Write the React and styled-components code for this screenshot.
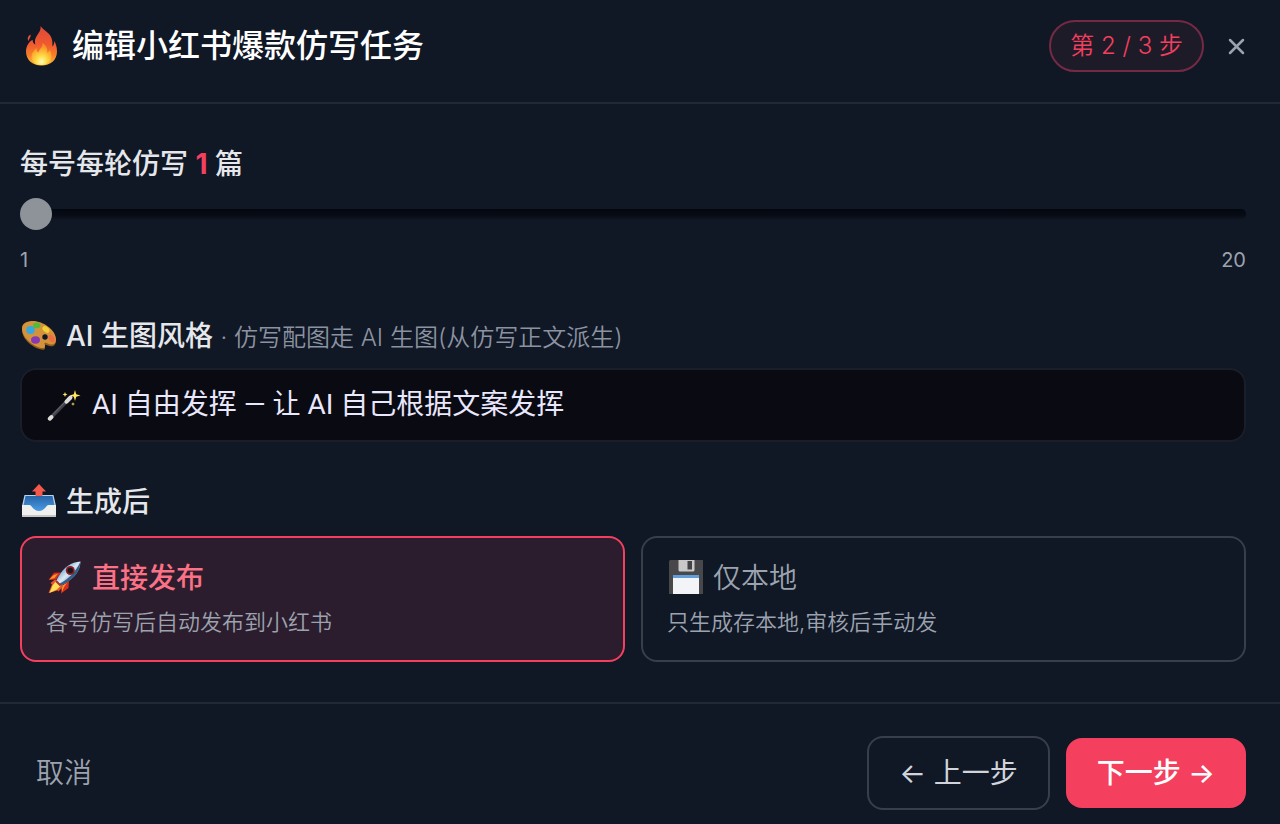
import React, { useState } from "react";
import styled, { createGlobalStyle, css } from "styled-components";

const GlobalStyle = createGlobalStyle`
  *, *::before, *::after { box-sizing: border-box; }
  body { margin: 0; background: #101725; }
  button, input, select { font: inherit; }
`;

const Dialog = styled.form`
  min-height: 100vh;
  display: flex;
  flex-direction: column;
  background: #101725;
  color: #e5e7eb;
  font-family: Inter, "Noto Sans CJK SC", sans-serif;
  font-size: 28px;
  font-weight: 350;
  line-height: 40px;
`;

const Header = styled.header`
  display: flex;
  align-items: center;
  justify-content: space-between;
  padding: 20px 20px 30px;
  border-bottom: 2px solid #222836;
`;

const Title = styled.h1`
  display: flex;
  align-items: center;
  gap: 8px;
  margin: 0;
  color: #ffffff;
  font-size: 32px;
  font-weight: 500;
  line-height: 52px;
`;

const HeaderTools = styled.div`
  display: flex;
  align-items: center;
  gap: 8px;
`;

const StepPill = styled.span`
  padding: 0 19px;
  border: 2px solid #742a43;
  border-radius: 26px;
  background: #1e1b29;
  color: #f43f5e;
  font-size: 24px;
  line-height: 48px;
`;

const CloseButton = styled.button`
  display: flex;
  align-items: center;
  justify-content: center;
  width: 48px;
  height: 48px;
  padding: 0;
  border: 0;
  background: none;
  color: #9ca3af;
  cursor: pointer;
`;

const Body = styled.main`
  display: flex;
  flex-direction: column;
  gap: 40px;
  padding: 40px 34px 40px 20px;
`;

const Field = styled.section`
  display: flex;
  flex-direction: column;
  gap: ${(p) => p.$gap}px;
`;

const labelText = css`
  display: flex;
  align-items: center;
  gap: 8px;
  font-weight: 500;
`;

const FieldLabel = styled.label`${labelText}`;
const FieldHeading = styled.h2`
  ${labelText}
  margin: 0;
  font-size: 28px;
`;

const Count = styled.strong`
  color: #f43f5e;
  font-weight: 700;
`;

const Hint = styled.span`
  color: #8b93a1;
  font-size: 24px;
  font-weight: 350;
  line-height: 24px;
`;

const Slider = styled.input`
  appearance: none;
  display: block;
  width: 100%;
  height: 32px;
  margin: 0;
  background: none;
  cursor: pointer;

  &::-webkit-slider-runnable-track {
    height: 10px;
    border-radius: 5px;
    background: linear-gradient(#04070f, #070b15 60%, #0e1420);
  }
  &::-webkit-slider-thumb {
    appearance: none;
    width: 32px;
    height: 32px;
    margin-top: -11px;
    border-radius: 50%;
    background: #8e9299;
  }
`;

const Scale = styled.div`
  display: flex;
  justify-content: space-between;
  color: #9ca3af;
  font-size: 20px;
  font-weight: 400;
  line-height: 32px;
`;

const SelectBox = styled.div`
  display: flex;
  align-items: center;
  gap: 8px;
  padding: 0 24px;
  border: 2px solid #1a1e29;
  border-radius: 16px;
  background: #0a0a12;
`;

const Select = styled.select`
  appearance: none;
  flex: 1;
  min-width: 0;
  height: 70px;
  padding: 0;
  border: 0;
  outline: 0;
  background: none;
  color: #e9e7fb;
  font-family: Roboto, "Noto Sans CJK SC", sans-serif;
  font-weight: 400;
  cursor: pointer;
`;

const Cards = styled.div`
  display: grid;
  grid-template-columns: 1fr 1fr;
  gap: 16px;
`;

const Card = styled.label`
  position: relative;
  display: flex;
  flex-direction: column;
  gap: 8px;
  padding: 20px 24px 22px;
  border: 2px solid ${(p) => (p.$active ? "#f43f5e" : "#383e4a")};
  border-radius: 16px;
  background: ${(p) => (p.$active ? "#2b1d2d" : "transparent")};
  color: #9ca3af;
  cursor: pointer;
`;

const CardRadio = styled.input`
  appearance: none;
  position: absolute;
  inset: 0;
  margin: 0;
  border-radius: 14px;
  cursor: pointer;
`;

const CardTitle = styled.span`
  display: flex;
  align-items: center;
  gap: 8px;
  color: ${(p) => (p.$active ? "#fb7185" : "#9ca3af")};
  font-weight: ${(p) => (p.$active ? 500 : 350)};
`;

const CardText = styled.span`
  font-size: 22px;
  line-height: 32px;
`;

const Footer = styled.footer`
  display: flex;
  align-items: center;
  justify-content: space-between;
  padding: 32px 34px 14px 20px;
  border-top: 2px solid #222836;
`;

const Actions = styled.div`
  display: flex;
  align-items: center;
  gap: 16px;
`;

const buttonKinds = {
  plain: css`
    padding: 0 16px;
    background: none;
    color: #9ca3af;
  `,
  outline: css`
    padding: 15px 30px;
    border: 2px solid #383e4a;
    color: #d1d5db;
    background: none;
    font-weight: 400;
  `,
  primary: css`
    padding: 15px 31px;
    background: #f43f5e;
    color: #ffffff;
    font-weight: 500;
  `,
};

const Button = styled.button`
  border: 0;
  border-radius: 16px;
  line-height: 40px;
  cursor: pointer;
  ${(p) => buttonKinds[p.$kind]}
`;

const Glyph = styled.svg`
  flex: none;
  width: ${(p) => p.$w || 38}px;
  height: 40px;
`;

const Fire = () => (
  <Glyph $w={44} viewBox="0 0 44 40" aria-hidden="true">
    <defs>
      <linearGradient id="fire" x1="0" y1="0" x2="0" y2="1">
        <stop offset="0" stopColor="#dc4a3c" />
        <stop offset=".45" stopColor="#f0582f" />
        <stop offset=".75" stopColor="#f8802a" />
        <stop offset="1" stopColor="#fcc23a" />
      </linearGradient>
      <radialGradient id="flame" cx=".5" cy=".85" r=".7">
        <stop offset="0" stopColor="#fffbc0" />
        <stop offset=".35" stopColor="#ffe04b" />
        <stop offset=".75" stopColor="#fdb02e" />
        <stop offset="1" stopColor="#fb8f2c" />
      </radialGradient>
    </defs>
    <path fill="url(#fire)" d="M20.500 0c.6 4-1.500 6.500-3.500 9.500-2 3-2.500 5.500-1.700 9-1.600-.8-2.600-2.600-2.800-4.800C8.500 16 6 20.500 6 25.500 6 34 12.500 39.500 21.500 39.500S37 34 37 25.500c0-4-1-7.500-2.700-10.500 0 2.500-.6 4.200-2 5.500.6-5-.3-9.500-3.800-13C25.500 4.500 22.500 3 20.500 0z" />
    <path fill="#e8503a" d="M10.500 8.500c.8 2.500-1.500 3.800-1.800 6.500-1.600-1.500-1.200-4.800 1.800-6.500z" />
    <path fill="url(#flame)" d="M22.500 17c.7 4-3 5.500-4 9.500-1.600-1-2.200-2.500-2-4.500-3 2.500-5 5-5 8.500 0 5.500 4 8.500 10 8.500s10-3.500 10-9c0-3-.8-5-2-6.500-.3 1.700-1 2.700-2.200 3.500.5-4.500-1.300-7.500-4.800-10z" />
  </Glyph>
);

const Palette = () => (
  <Glyph viewBox="0 0 38 40" aria-hidden="true">
    <path fill="#925c1c" d="M2 14C2 8 7 6 13 6c10 0 23 9 23 19 0 3-2 5.500-5 5.300-2.600-.2-4.500-1.800-6-1.600-2 .3 1.500 2.500-.5 4.500C21.500 36 2 27 2 14z" />
    <path fill="#d4923c" d="M2 12.500C2 7 7 5 13 5c10 0 23 9 23 18.500 0 3-2 5.300-5 5.100-2.600-.2-4.500-2-6-1.800-2 .3 1.500 2.700-.5 4.700C21.500 34.500 2 25 2 12.500z" />
    <circle cx="25" cy="21" r="2.700" fill="#111827" />
    <ellipse cx="10.500" cy="14" rx="4.300" ry="3.900" fill="#35a8dd" />
    <ellipse cx="16.700" cy="9.500" rx="3.700" ry="2.700" fill="#50bd36" />
    <ellipse cx="26" cy="13.500" rx="4" ry="2.600" fill="#f1cf36" transform="rotate(40 26 13.5)" />
    <ellipse cx="31.500" cy="22.500" rx="2.600" ry="4" fill="#ed6e45" transform="rotate(-35 31.500 22.5)" />
    <ellipse cx="15.500" cy="24" rx="4.500" ry="3.700" fill="#8539b4" />
  </Glyph>
);

const Wand = () => (
  <Glyph viewBox="0 0 38 40" aria-hidden="true">
    <path d="M4 33.500 23 14" stroke="#414248" strokeWidth="3.600" strokeLinecap="round" />
    <path d="M4.500 32 21.500 14.500" stroke="#74767c" strokeWidth=".8" />
    <path d="M3.700 33.700 5.500 32M20.500 16.700l4-4.200" stroke="#dddcd8" strokeWidth="4" strokeLinecap="round" />
    <path fill="#ffe763" d="m29 5 1.200 4.300L34.500 10.500l-4.300 1.200L29 16l-1.200-4.300-4.300-1.200 4.300-1.200zM19 7l.7 1.800 1.800.7-1.800.7L19 12l-.7-1.800-1.800-.7 1.800-.7zM27 17l.5 1.500 1.500.5-1.500.5L27 21l-.5-1.500L25 19l1.500-.5z" />
  </Glyph>
);

const Outbox = () => (
  <Glyph viewBox="0 0 38 40" aria-hidden="true">
    <defs>
      <linearGradient id="tray" x1="0" y1="0" x2="0" y2="1">
        <stop offset="0" stopColor="#2864a5" />
        <stop offset="1" stopColor="#4a9be8" />
      </linearGradient>
    </defs>
    <path fill="#b9d5ee" d="M4.500 13h29l2.500 11H2z" />
    <path fill="url(#tray)" d="M5.500 14h27l2.500 12-8 3h-16l-8-3z" />
    <path fill="#f1f0ed" d="M2 23h7.500c2.500 0 3.500 6 9.500 6s7-6 9.500-6H36v10.500c0 1-.5 1.500-1.500 1.500h-31C2.500 35 2 34.500 2 33.500z" />
    <path fill="#c8c7c5" d="M2 33h34v.8c0 .8-.5 1.200-1.500 1.200h-31c-1 0-1.500-.4-1.500-1.200z" />
    <path fill="#f35a4b" d="m19 2 7 7.500h-3.500V14h-7V9.500H12z" />
  </Glyph>
);

const Rocket = () => (
  <Glyph viewBox="0 0 38 40" aria-hidden="true">
    <defs>
      <linearGradient id="hull" x1="0" y1="0" x2="1" y2="1">
        <stop offset=".25" stopColor="#6da2cb" />
        <stop offset=".5" stopColor="#dceaf4" />
        <stop offset=".8" stopColor="#517fa8" />
      </linearGradient>
    </defs>
    <path fill="#dc2e1d" d="M15 14.500 8 14.800 2.500 22l7.500-.5zM23 23l-.5 7-7.500 5.500 1-8z" />
    <path fill="#f99825" d="m12 15.500-5 2-3.500 4 5-1.500zM21 25l-3 4-2 5-.5-6z" />
    <path fill="#f1512a" d="M9 21.500 4.500 25 6 26.500l-3.500 8.500 9-2.500 1 1 4.500-5z" />
    <path fill="#ffe056" d="m10 23-3.500 4.500L3.500 35l7.500-3.500 4-4z" />
    <path fill="url(#hull)" d="M34.500 3.500C25 4 18 9 12.500 18.500L10 23l4.500 4.500 5-2.500C28.500 20 34 13 34.500 3.500z" />
    <path fill="#315d86" d="M34.500 3.500C34 13 28.500 20 19.500 25l-5 2.500-1.500-1.500C23 21 30 13.500 34.500 3.500z" />
    <circle cx="24.300" cy="12.500" r="4.500" fill="#8d1c24" />
    <circle cx="24.300" cy="12.500" r="2.800" fill="#17191f" />
    <path stroke="#a9302c" strokeWidth="2" d="m10 23 4.500 4.500" />
  </Glyph>
);

const Floppy = () => (
  <Glyph viewBox="0 0 38 40" aria-hidden="true">
    <path fill="#48484a" d="M2 3.500Q2 2 3.500 2H36v34H2z" />
    <path fill="#c9c9ca" d="M11.500 2h16v10q0 1.500-1.500 1.500H13q-1.500 0-1.500-1.500z" />
    <path fill="#434345" d="M20.500 3h4.500v8.500h-4.500z" />
    <path fill="#f3f4f7" d="M6 17h26v19H6z" />
    <path fill="#619dd8" d="M6 17h26v3H6z" />
  </Glyph>
);

const CloseIcon = () => (
  <svg width="18" height="18" viewBox="0 0 18 18" aria-hidden="true">
    <path d="M3 3l13 13M16 3 3 16" stroke="currentColor" strokeWidth="2.500" strokeLinecap="round" />
  </svg>
);

const outcomes = [
  { id: "publish", icon: Rocket, title: "直接发布", text: "各号仿写后自动发布到小红书" },
  { id: "local", icon: Floppy, title: "仅本地", text: "只生成存本地,审核后手动发" },
];

export default function App() {
  const [count, setCount] = useState(1);
  const [outcome, setOutcome] = useState("publish");

  return (
    <>
      <GlobalStyle />
      <Dialog onSubmit={(e) => e.preventDefault()}>
        <Header>
          <Title>
            <Fire />
            编辑小红书爆款仿写任务
          </Title>
          <HeaderTools>
            <StepPill>第 2 / 3 步</StepPill>
            <CloseButton type="button" aria-label="关闭">
              <CloseIcon />
            </CloseButton>
          </HeaderTools>
        </Header>

        <Body>
          <Field $gap={14}>
            <FieldLabel htmlFor="count">
              <span>
                每号每轮仿写 <Count>{count}</Count> 篇
              </span>
            </FieldLabel>
            <Slider
              id="count"
              type="range"
              min="1"
              max="20"
              value={count}
              onChange={(e) => setCount(Number(e.target.value))}
            />
            <Scale>
              <span>1</span>
              <span>20</span>
            </Scale>
          </Field>

          <Field $gap={12}>
            <FieldLabel htmlFor="style">
              <Palette />
              <span>
                AI 生图风格 <Hint>· 仿写配图走 AI 生图(从仿写正文派生)</Hint>
              </span>
            </FieldLabel>
            <SelectBox>
              <Wand />
              <Select id="style">
                <option>AI 自由发挥 — 让 AI 自己根据文案发挥</option>
              </Select>
            </SelectBox>
          </Field>

          <Field $gap={14}>
            <FieldHeading id="after">
              <Outbox />
              生成后
            </FieldHeading>
            <Cards role="radiogroup" aria-labelledby="after">
              {outcomes.map(({ id, icon: Icon, title, text }) => (
                <Card key={id} $active={outcome === id}>
                  <CardRadio
                    type="radio"
                    name="outcome"
                    value={id}
                    checked={outcome === id}
                    onChange={() => setOutcome(id)}
                  />
                  <CardTitle $active={outcome === id}>
                    <Icon />
                    {title}
                  </CardTitle>
                  <CardText>{text}</CardText>
                </Card>
              ))}
            </Cards>
          </Field>
        </Body>

        <Footer>
          <Button type="button" $kind="plain">取消</Button>
          <Actions>
            <Button type="button" $kind="outline">← 上一步</Button>
            <Button type="submit" $kind="primary">下一步 →</Button>
          </Actions>
        </Footer>
      </Dialog>
    </>
  );
}
